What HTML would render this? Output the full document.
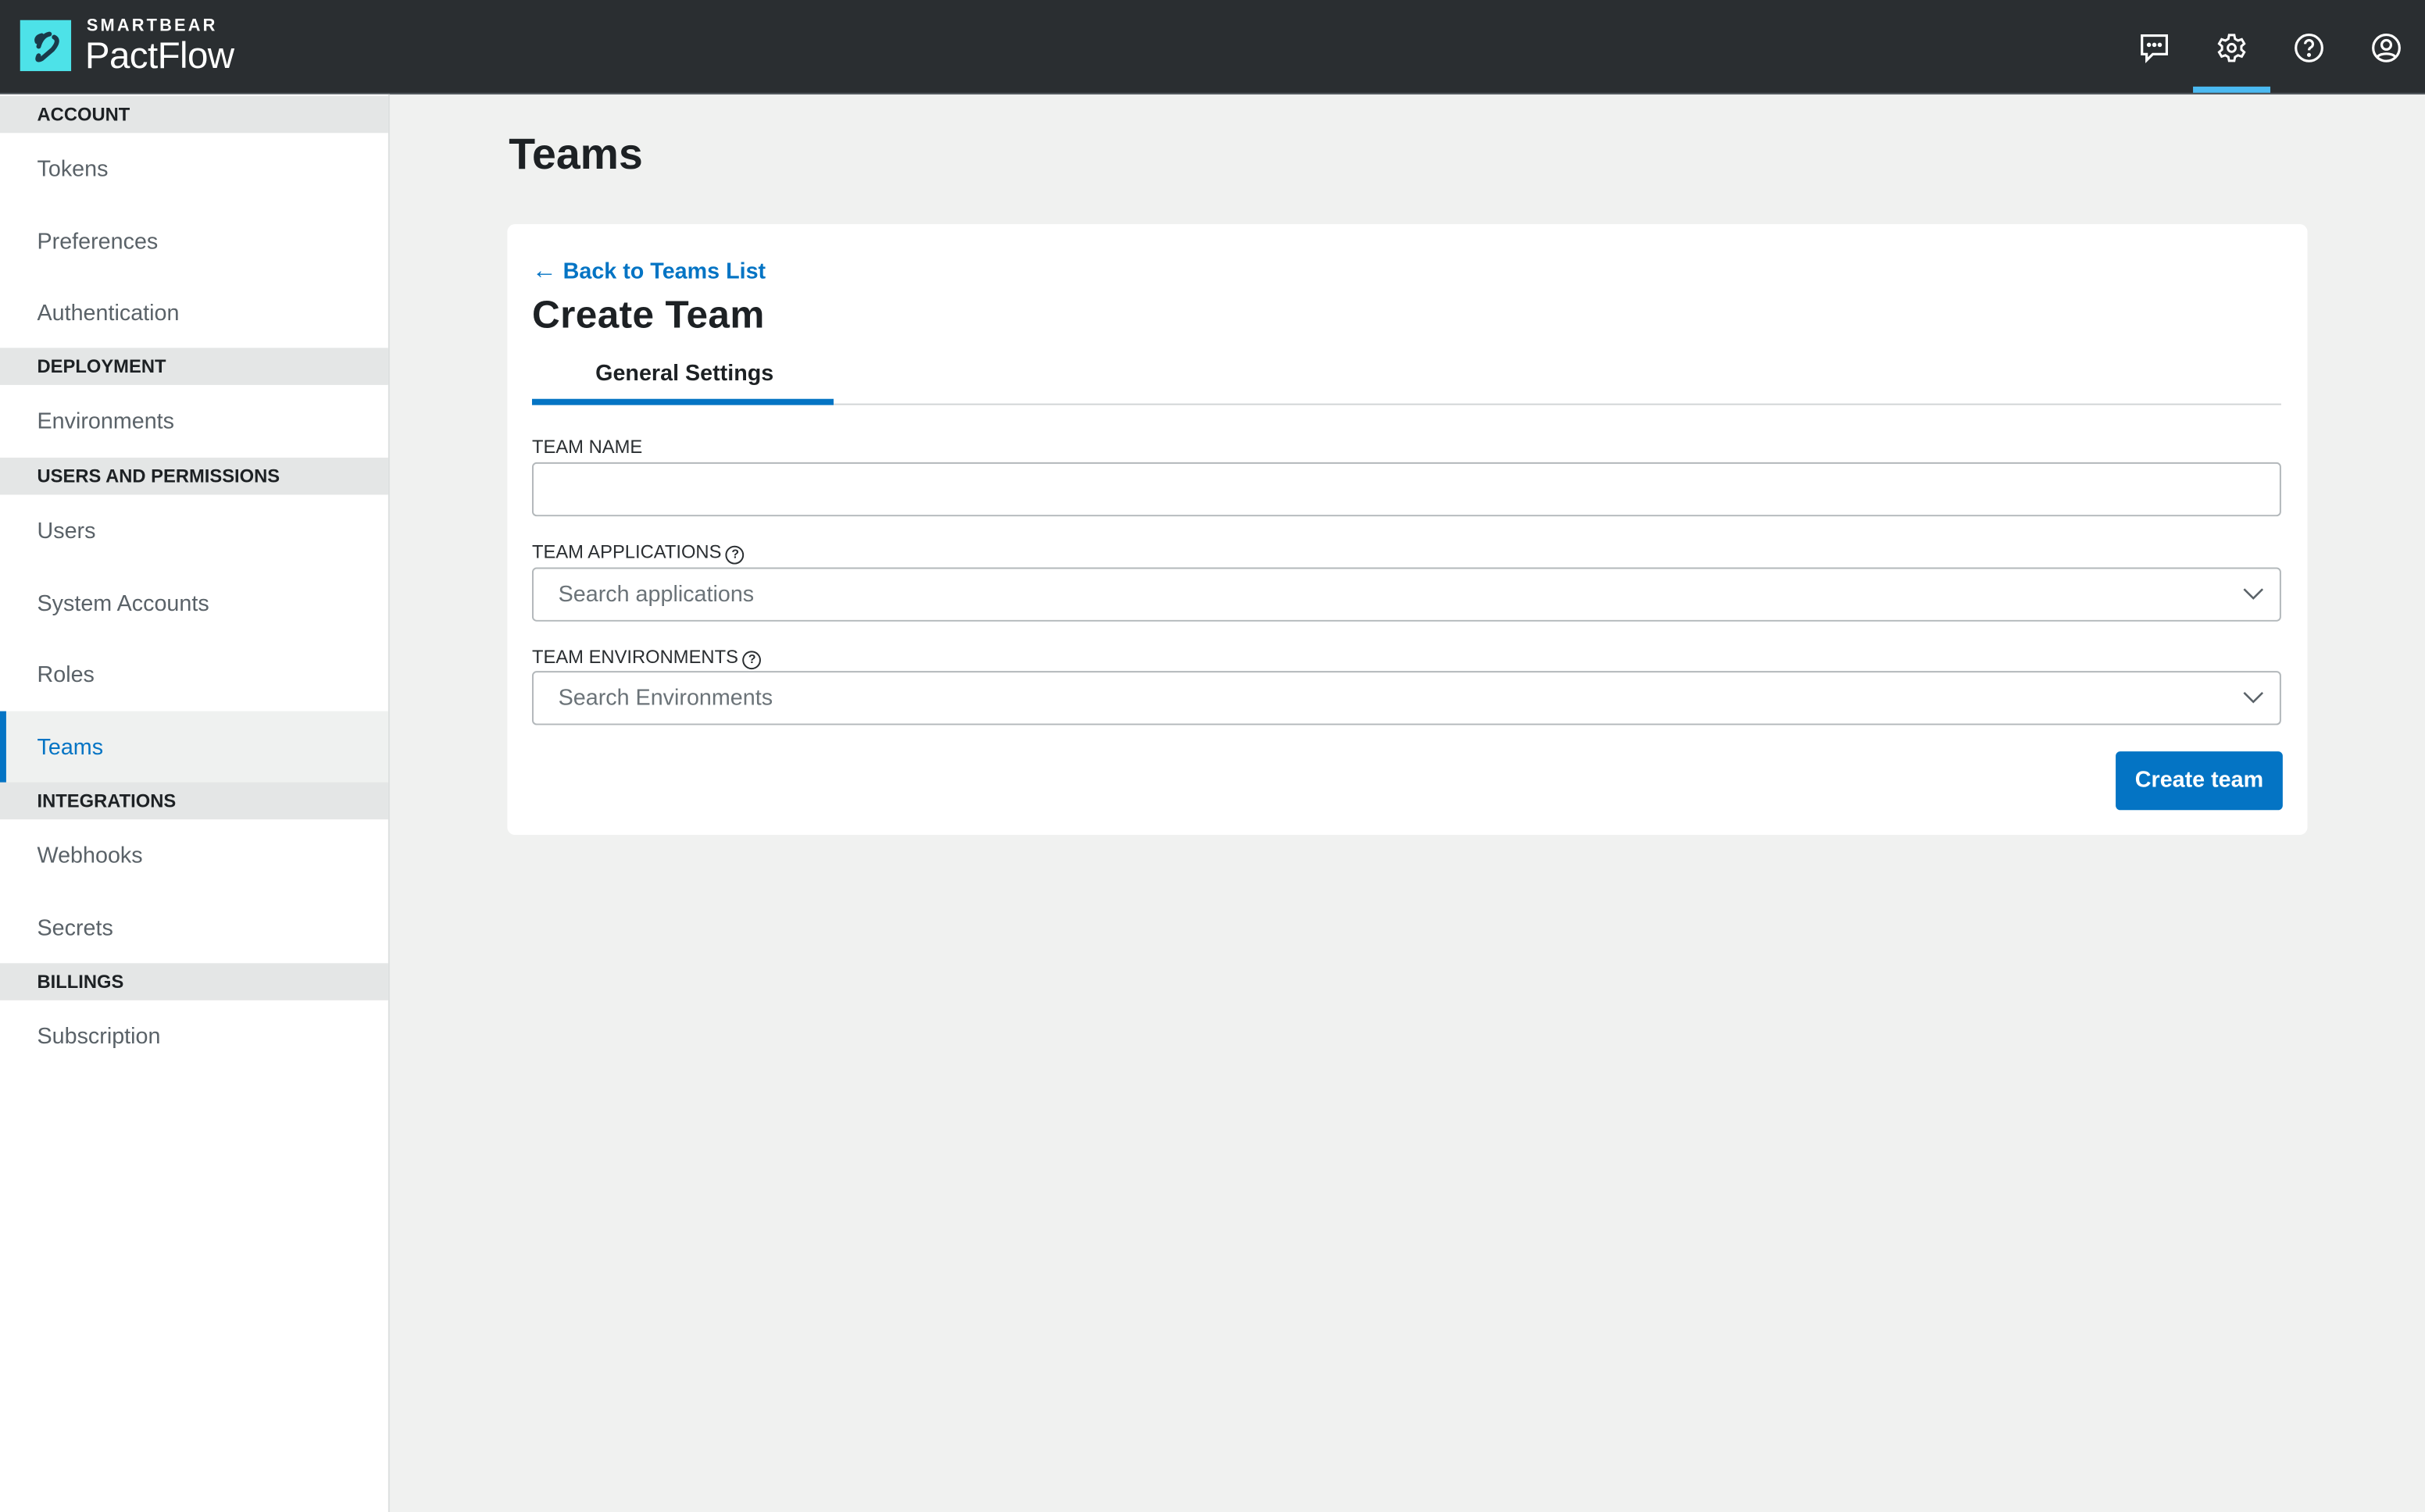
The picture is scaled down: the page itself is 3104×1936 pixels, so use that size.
<!DOCTYPE html>
<html><head><meta charset="utf-8"><style>
html,body{margin:0;padding:0;width:3104px;height:1936px;overflow:hidden;background:#f0f1f0;}
#s{position:absolute;left:0;top:0;width:1568px;height:978px;transform:scale(1.97959);transform-origin:0 0;font-family:"Liberation Sans",sans-serif;background:#f0f1f0;}
.a{position:absolute;}
.hdr{left:0;top:0;width:1568px;height:60px;background:#2a2e31;border-bottom:1.5px solid #4d5459;}
.side{left:0;top:61px;width:251px;height:917px;background:#fff;border-right:1.5px solid #dcdfdf;}
.sh{position:absolute;left:0;width:251px;height:24px;background:#e4e6e6;font-size:12px;font-weight:bold;color:#1d2124;line-height:24px;padding-left:24px;box-sizing:border-box;}
.si{position:absolute;left:0;width:251px;height:46.5px;font-size:14.5px;color:#5a6268;line-height:48px;padding-left:24px;box-sizing:border-box;}
.lbl{position:absolute;left:16px;font-size:12px;color:#2a2e31;}
.inp{position:absolute;left:16px;width:1131px;height:35px;border:1px solid #b3b8bb;border-radius:3px;box-sizing:border-box;font-size:14.5px;color:#6b7378;line-height:34px;padding-left:16px;}
.q{display:inline-block;width:10px;height:10px;border:1.2px solid #2a2e31;border-radius:50%;font-size:8px;text-align:center;line-height:10px;vertical-align:0px;margin-left:3px;font-weight:bold;}
</style></head><body><div id="s">
<div class="a hdr">
 <div class="a" style="left:13px;top:13px;width:33px;height:33px;background:#4de2e8;"></div>
 <svg class="a" style="left:13px;top:13px" width="33" height="33" viewBox="0 0 33 33"><path d="M14 10 Q10 11 11 14 M22 11 Q26 13 21 19 L14 25 Q10 27 12 23 M19 9 Q14 10 12 17" stroke="#1a3a4a" stroke-width="3" fill="none" stroke-linecap="round"/></svg>
 <div class="a" style="left:56px;top:11px;font-size:11px;color:#fff;letter-spacing:1.6px;font-weight:bold">SMARTBEAR</div>
 <div class="a" style="left:55px;top:23px;font-size:24px;color:#fff;letter-spacing:-0.3px">PactFlow</div>
 <svg class="a" style="left:1383px;top:21px" width="20" height="20" viewBox="0 0 20 20" fill="none" stroke="#fff" stroke-width="1.6"><path d="M2 2h16v12H9l-4 4v-4H2z"/><circle cx="6.5" cy="8" r=".6" fill="#fff"/><circle cx="10" cy="8" r=".6" fill="#fff"/><circle cx="13.5" cy="8" r=".6" fill="#fff"/></svg>
 <svg class="a" style="left:1433px;top:21px" width="20" height="20" viewBox="0 0 24 24" fill="none" stroke="#fff" stroke-width="1.8"><circle cx="12" cy="12" r="3"/><path d="M10 2h4l.6 3 2.3 1.3 2.9-1 2 3.4-2.3 2v2.6l2.3 2-2 3.4-2.9-1-2.3 1.3-.6 3h-4l-.6-3-2.3-1.3-2.9 1-2-3.4 2.3-2v-2.6l-2.3-2 2-3.4 2.9 1L9.4 5z"/></svg>
 <svg class="a" style="left:1483px;top:21px" width="20" height="20" viewBox="0 0 20 20" fill="none" stroke="#fff" stroke-width="1.6"><circle cx="10" cy="10" r="8.5"/><path d="M7.5 7.5a2.5 2.5 0 1 1 3.5 2.3c-.7.4-1 .8-1 1.7"/><circle cx="10" cy="14.5" r=".5" fill="#fff"/></svg>
 <svg class="a" style="left:1533px;top:21px" width="20" height="20" viewBox="0 0 20 20" fill="none" stroke="#fff" stroke-width="1.6"><circle cx="10" cy="10" r="8.5"/><circle cx="10" cy="8" r="3"/><path d="M4 16c2-3 10-3 12 0"/></svg>
 <div class="a" style="left:1418px;top:56px;width:50px;height:4px;background:#4bbaf2"></div>
</div>
<div class="a side">
 <div class="sh" style="top:1px">ACCOUNT</div>
 <div class="si" style="top:25px">Tokens</div>
 <div class="si" style="top:71.5px">Preferences</div>
 <div class="si" style="top:118px">Authentication</div>
 <div class="sh" style="top:164px">DEPLOYMENT</div>
 <div class="si" style="top:188px">Environments</div>
 <div class="sh" style="top:235px">USERS AND PERMISSIONS</div>
 <div class="si" style="top:259px">Users</div>
 <div class="si" style="top:305.5px">System Accounts</div>
 <div class="si" style="top:352px">Roles</div>
 <div class="si" style="top:399px;background:#eff1f0;color:#0474c4;border-left:4px solid #0474c4;padding-left:20px">Teams</div>
 <div class="sh" style="top:445px">INTEGRATIONS</div>
 <div class="si" style="top:469px">Webhooks</div>
 <div class="si" style="top:515.5px">Secrets</div>
 <div class="sh" style="top:562px">BILLINGS</div>
 <div class="si" style="top:586px">Subscription</div>
</div>
<div class="a" style="left:329px;top:84px;font-size:28px;font-weight:bold;color:#1d2124">Teams</div>
<div class="a" style="left:328px;top:145px;width:1164px;height:395px;background:#fff;border-radius:5px;">
 <div class="a" style="left:16px;top:22px;font-size:14.5px;font-weight:bold;color:#0474c4"><span style="font-size:16px;font-weight:normal">&#8592;</span> Back to Teams List</div>
 <div class="a" style="left:16px;top:45px;font-size:25px;color:#1d2124;font-weight:bold;letter-spacing:.2px">Create Team</div>
 <div class="a" style="left:57px;top:89px;font-size:14.5px;font-weight:bold;color:#1d2124">General Settings</div>
 <div class="a" style="left:16px;top:116px;width:1131px;height:1px;background:#d2d5d6"></div>
 <div class="a" style="left:16px;top:113px;width:195px;height:4px;background:#0474c4"></div>
 <div class="lbl" style="top:137px">TEAM NAME</div>
 <div class="inp" style="top:154px"></div>
 <div class="lbl" style="top:205px">TEAM APPLICATIONS<span class="q">?</span></div>
 <div class="inp" style="top:222px">Search applications<svg class="a" style="right:10px;top:11px" width="14" height="10" viewBox="0 0 14 10"><path d="M1 2l6 6 6-6" stroke="#5a6268" stroke-width="1.3" fill="none"/></svg></div>
 <div class="lbl" style="top:273px">TEAM ENVIRONMENTS<span class="q">?</span></div>
 <div class="inp" style="top:289px">Search Environments<svg class="a" style="right:10px;top:11px" width="14" height="10" viewBox="0 0 14 10"><path d="M1 2l6 6 6-6" stroke="#5a6268" stroke-width="1.3" fill="none"/></svg></div>
 <div class="a" style="left:1040px;top:341px;width:108px;height:38px;background:#0474c4;border-radius:3px;color:#fff;font-size:14.5px;font-weight:bold;text-align:center;line-height:38px">Create team</div>
</div>
</div></body></html>
